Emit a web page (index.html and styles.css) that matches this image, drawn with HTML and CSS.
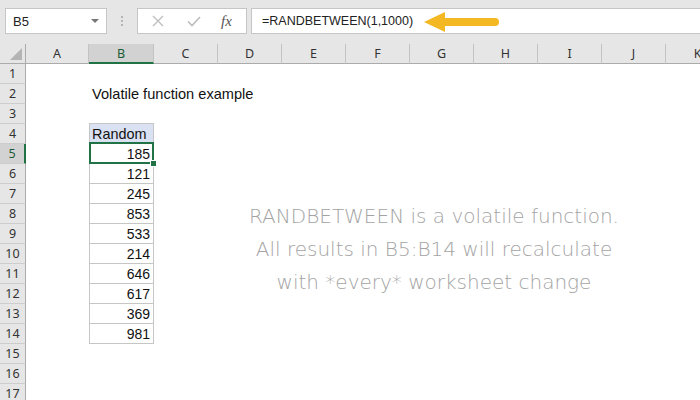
FILE: index.html
```html
<!DOCTYPE html>
<html lang="en">
<head>
    <meta charset="UTF-8">
    <title>RANDBETWEEN - volatile function</title>
    <link rel="stylesheet" href="styles.css">
</head>
<body>
    <div class="toolbar">
        <div class="namebox">
            <span>B5</span>
            <span class="caret"></span>
        </div>
        <div class="grip"><i></i><i></i><i></i></div>
        <div class="fx-buttons">
            <svg class="btn cancel" width="12" height="12" viewBox="0 0 12 12">
                <path d="M1 1 L11 11 M11 1 L1 11" stroke="#bdbdbd" stroke-width="1.3" fill="none"/>
            </svg>
            <svg class="btn enter" width="14" height="11" viewBox="0 0 14 11">
                <path d="M1 5.5 L5 9.5 L13 1" stroke="#bdbdbd" stroke-width="1.6" fill="none"/>
            </svg>
            <span class="fx">fx</span>
        </div>
        <div class="formula">
            <span class="formula-text">=RANDBETWEEN(1,1000)</span>
            <svg class="arrow" width="76" height="22" viewBox="0 0 76 22">
                <path d="M0 11 L21 1 L21 21 Z" fill="#f4b822"/>
                <line x1="19" y1="11" x2="71" y2="11" stroke="#f4b822" stroke-width="8" stroke-linecap="round"/>
            </svg>
        </div>
    </div>

    <div class="sheet">
        <div class="row head">
            <div class="corner"></div>
            <div class="ch">A</div>
            <div class="ch sel">B</div>
            <div class="ch">C</div>
            <div class="ch">D</div>
            <div class="ch">E</div>
            <div class="ch">F</div>
            <div class="ch">G</div>
            <div class="ch">H</div>
            <div class="ch">I</div>
            <div class="ch">J</div>
            <div class="ch">K</div>
        </div>
        <div class="row"><div class="rh">1</div><div class="c"></div><div class="c"></div></div>
        <div class="row"><div class="rh">2</div><div class="c"></div><div class="c text">Volatile function example</div></div>
        <div class="row"><div class="rh">3</div><div class="c"></div><div class="c tb-top"></div></div>
        <div class="row"><div class="rh">4</div><div class="c"></div><div class="c tb hdr">Random</div></div>
        <div class="row"><div class="rh sel">5</div><div class="c"></div><div class="c tb num active">185</div></div>
        <div class="row"><div class="rh">6</div><div class="c"></div><div class="c tb num">121</div></div>
        <div class="row"><div class="rh">7</div><div class="c"></div><div class="c tb num">245</div></div>
        <div class="row"><div class="rh">8</div><div class="c"></div><div class="c tb num">853</div></div>
        <div class="row"><div class="rh">9</div><div class="c"></div><div class="c tb num">533</div></div>
        <div class="row"><div class="rh">10</div><div class="c"></div><div class="c tb num">214</div></div>
        <div class="row"><div class="rh">11</div><div class="c"></div><div class="c tb num">646</div></div>
        <div class="row"><div class="rh">12</div><div class="c"></div><div class="c tb num">617</div></div>
        <div class="row"><div class="rh">13</div><div class="c"></div><div class="c tb num">369</div></div>
        <div class="row"><div class="rh">14</div><div class="c"></div><div class="c tb num">981</div></div>
        <div class="row"><div class="rh">15</div></div>
        <div class="row"><div class="rh">16</div></div>
        <div class="row"><div class="rh">17</div></div>

        <!-- text box floating over the grid -->
        <div class="note">
            RANDBETWEEN is a volatile function.<br>
            All results in B5:B14 will recalculate<br>
            with *every* worksheet change
        </div>
    </div>
</body>
</html>
```

FILE: styles.css
```css
body {
    margin: 0;
    width: 700px;
    height: 400px;
    overflow: hidden;
    background: #fff;
    font-family: "Liberation Sans", Arial, sans-serif;
}

/* formula bar */
.toolbar {
    height: 44px;
    background: #e6e6e6;
    display: flex;
    align-items: flex-start;
    padding: 8px 0 0 5px;
    box-sizing: border-box;
}
.namebox {
    width: 102px;
    height: 26px;
    box-sizing: border-box;
    background: #fff;
    border: 1px solid #c6c6c6;
    display: flex;
    align-items: center;
    justify-content: space-between;
    padding: 0 7px 0 7px;
    font-size: 13px;
    color: #222;
}
.caret {
    width: 0;
    height: 0;
    border-left: 4px solid transparent;
    border-right: 4px solid transparent;
    border-top: 4px solid #777;
}
.grip {
    width: 30px;
    height: 26px;
    display: flex;
    flex-direction: column;
    align-items: center;
    justify-content: center;
    gap: 2px;
}
.grip i {
    width: 2px;
    height: 2px;
    background: #b5b5b5;
}
.fx-buttons {
    width: 110px;
    height: 26px;
    box-sizing: border-box;
    background: #fff;
    border: 1px solid #c6c6c6;
    display: flex;
    align-items: center;
    padding-left: 14px;
}
.cancel { margin-right: 23px; }
.enter { margin-right: 20px; }
.fx {
    color: #555;
    font-family: "Liberation Serif", serif;
    font-style: italic;
    font-size: 15px;
}
.formula {
    flex: 1;
    height: 26px;
    margin-left: 4px;
    box-sizing: border-box;
    background: #fff;
    border: 1px solid #c6c6c6;
    border-right: none;
    display: flex;
    align-items: center;
    padding-left: 10px;
}
.formula-text {
    font-size: 12.5px;
    color: #222;
}
.arrow {
    margin-left: 11px;
    margin-top: 1px;
}

/* grid */
.sheet {
    position: relative;
}
.row {
    display: grid;
    grid-template-columns: 26px 63px 65px repeat(9, 64px);
    height: 20px;
}
.row > div {
    box-sizing: border-box;
    height: 20px;
}
.head > div {
    background: #e6e6e6;
    border-bottom: 1px solid #ababab;
    font-family: "Noto Sans", sans-serif;
    font-size: 12.5px;
    color: #333;
    text-align: center;
    line-height: 19px;
}
.head .ch {
    border-right: 1px solid #c3c3c3;
}
.corner {
    position: relative;
    border-right: 1px solid #ababab;
}
.corner::after {
    content: "";
    position: absolute;
    right: 3px;
    bottom: 3px;
    border-left: 12px solid transparent;
    border-bottom: 12px solid #b4b4b4;
}
.head .sel {
    background: #d2d2d2;
    border-bottom: 2px solid #217346;
    color: #1c5b37;
}
.rh {
    background: #e6e6e6;
    border-right: 1px solid #ababab;
    border-bottom: 1px solid #cdcdcd;
    font-family: "Noto Sans", sans-serif;
    font-size: 12.5px;
    color: #333;
    text-align: center;
    line-height: 20px;
}
.rh.sel {
    background: #d2d2d2;
    border-right: 2px solid #217346;
    color: #1c5b37;
}
.c {
    font-size: 14px;
    color: #111;
    line-height: 20px;
    white-space: nowrap;
    border-bottom: 1px solid transparent;
}
.text {
    padding-left: 3px;
    font-size: 14.6px;
}
.tb-top {
    border-bottom: 1px solid #c6c6c6 !important;
}
.tb {
    border-left: 1px solid #c6c6c6;
    border-right: 1px solid #c6c6c6;
    border-bottom: 1px solid #c6c6c6 !important;
}
.hdr {
    background: #d9e1f2;
    padding-left: 2px;
    font-size: 14.4px;
}
.num {
    text-align: right;
    padding-right: 3px;
}
.active {
    position: relative;
}
.active::before {
    content: "";
    position: absolute;
    left: -1px;
    top: -2px;
    right: -1px;
    bottom: -1px;
    border: 2px solid #217346;
}
.active::after {
    content: "";
    position: absolute;
    right: -4px;
    bottom: -4px;
    width: 5px;
    height: 5px;
    background: #217346;
    border: 1px solid #fff;
}

.note {
    position: absolute;
    left: 234px;
    top: 156px;
    width: 400px;
    text-align: center;
    font-family: "DejaVu Sans", sans-serif;
    font-weight: 200;
    font-size: 20px;
    line-height: 33px;
    color: #a3a3a3;
}
```
